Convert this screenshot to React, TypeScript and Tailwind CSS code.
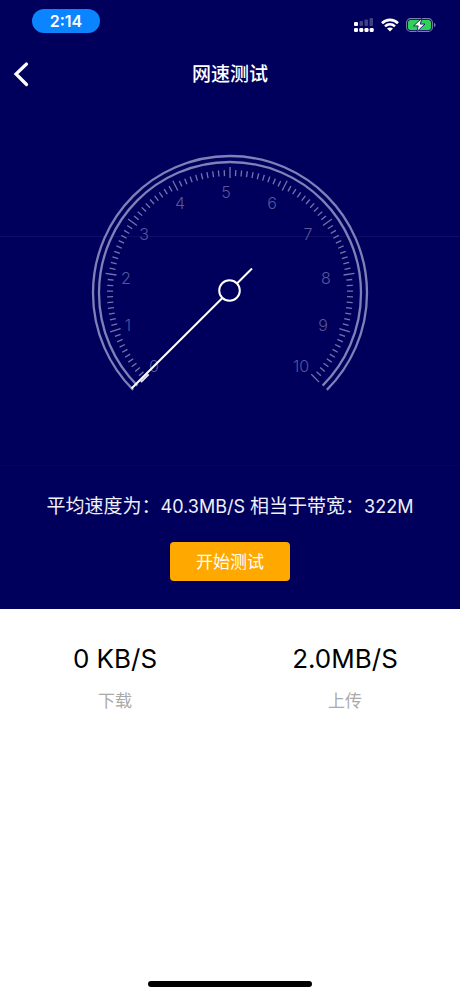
import React from 'react';

const FONT = "font-['Inter','Noto_Sans_CJK_SC',sans-serif]";

const CX = 140;
const CY = 140;

const labels = [
  { text: '0', x: 64, y: 213 },
  { text: '1', x: 38, y: 172 },
  { text: '2', x: 36, y: 125 },
  { text: '3', x: 54, y: 81 },
  { text: '4', x: 90, y: 50 },
  { text: '5', x: 136, y: 39 },
  { text: '6', x: 182, y: 50 },
  { text: '7', x: 218, y: 81 },
  { text: '8', x: 236, y: 125 },
  { text: '9', x: 233, y: 172 },
  { text: '10', x: 211, y: 213 },
];

const ticks = Array.from({ length: 101 }, (_, i) => i);

// Point on the dial, angle measured clockwise from the top
const polar = (radius: number, degrees: number) => {
  const rad = (degrees * Math.PI) / 180;
  return { x: CX + radius * Math.sin(rad), y: CY - radius * Math.cos(rad) };
};

const arc = (radius: number) => {
  const start = polar(radius, -135);
  const end = polar(radius, 135);
  return `M${start.x} ${start.y}A${radius} ${radius} 0 1 1 ${end.x} ${end.y}`;
};

const StatusBar: React.FC = () => {
  return (
    <div className="flex h-12 items-start justify-between pl-8 pr-6 pt-2">
      <span className="mt-px flex h-6 w-17 items-center justify-center rounded-full bg-[#0a84ff] text-base font-semibold text-white">
        2:14
      </span>
      <div className="flex h-8 items-center gap-[7px] pt-0.5">
        {/* Dual SIM signal */}
        <svg width="20" height="14" viewBox="0 0 20 14" fill="#fff" aria-hidden="true">
          <rect x="0" y="4" width="4" height="4" rx="1" />
          <rect x="5.5" y="3" width="3.5" height="5" rx="1" opacity="0.25" />
          <rect x="10.5" y="1.5" width="3.5" height="6.5" rx="1" opacity="0.25" />
          <rect x="15.5" y="0" width="3.5" height="8" rx="1" opacity="0.25" />
          <rect x="0" y="10" width="4" height="4" rx="1.3" />
          <rect x="5.3" y="10" width="4" height="4" rx="1.3" />
          <rect x="10.5" y="10" width="4" height="4" rx="1.3" />
          <rect x="15.7" y="10" width="4" height="4" rx="1.3" />
        </svg>
        <svg width="18" height="14" viewBox="0 0 18 14" fill="none" stroke="#fff" strokeWidth="2.6" aria-hidden="true">
          <path d="M1 5.2C5.6.7 12.4.7 17 5.2" />
          <path d="M4 8.4c2.9-2.7 7.1-2.7 10 0" />
          <path d="M9 13.6 6 10.6c1.700-1.500 4.300-1.500 6 0z" fill="#fff" stroke="none" />
        </svg>
        <svg width="30" height="14" viewBox="0 0 30 14" aria-hidden="true">
          <rect x="0.6" y="0.6" width="25.8" height="12.8" rx="4" fill="none" stroke="#7c7cae" strokeWidth="1.1" />
          <rect x="2" y="2" width="23" height="10" rx="2.5" fill="#30d158" />
          <path d="M28 5v4c1-.4 1.5-1.1 1.5-2S29 5.4 28 5z" fill="#7c7cae" />
          <path d="M15.800.3 7.600 7.900h4.600l-1.400 5.800 8.200-7.600h-4.700z" fill="#fff" stroke="#00005c" strokeWidth="0.8" />
        </svg>
      </div>
    </div>
  );
};

const Header: React.FC = () => {
  return (
    <header className="grid h-13 grid-cols-[1fr_auto_1fr] items-center px-3 text-white">
      <button aria-label="返回" className="flex h-8 w-8 items-center">
        <svg width="18" height="26" viewBox="0 0 18 26" fill="none" stroke="currentColor" strokeWidth="3.2" strokeLinecap="round" aria-hidden="true">
          <path d="M14.5 3 4 13l10.500 10.500" />
        </svg>
      </button>
      <h1 className="pt-0.5 text-[19px] font-medium leading-7">网速测试</h1>
    </header>
  );
};

const Gauge: React.FC = () => {
  return (
    <svg width="280" height="240" viewBox="0 0 280 240" className="mx-auto block" role="img" aria-label="0 - 10">
      <g fill="none" stroke="#8080b8" strokeWidth="2.3">
        <path d={arc(137)} />
        <path d={arc(131)} />
      </g>
      {ticks.map((i) => {
        const major = i % 10 === 0;
        const angle = -135 + i * 2.7;
        const from = polar(major ? 115 : 117, angle);
        const to = polar(major ? 126 : 123, angle);
        return (
          <line
            key={i}
            x1={from.x}
            y1={from.y}
            x2={to.x}
            y2={to.y}
            stroke={i === 0 ? '#e4e4f4' : '#7474ac'}
            strokeWidth={i === 0 ? 2 : 1.3}
          />
        );
      })}
      <g fill="#56569a" fontSize="16" fontWeight="300" textAnchor="middle" dominantBaseline="central">
        {labels.map((label) => (
          <text key={label.text} x={label.x} y={label.y}>
            {label.text}
          </text>
        ))}
      </g>
      <g stroke="#fff" strokeWidth="2">
        <line x1="41.5" y1="235.5" x2="162" y2="115.5" />
        <circle cx="139.500" cy="137.500" r="10.300" fill="#00005c" />
      </g>
    </svg>
  );
};

const stats = [
  { value: '0 KB/S', label: '下载' },
  { value: '2.0MB/S', label: '上传' },
];

const App: React.FC = () => {
  return (
    <div className={`${FONT} flex min-h-screen flex-col bg-white`}>
      <div className="relative bg-[#00005c] pb-7">
        {/* Faint hairlines across the background */}
        <div className="absolute inset-x-0 top-[236px] h-px bg-[#0e0e66]" />
        <div className="absolute inset-x-0 top-[465px] h-px bg-[#050560]" />
        <div className="relative">
          <StatusBar />
          <Header />
          <main className="flex flex-col items-center pt-[53px]">
            <Gauge />
            <p className="mt-[98px] text-[19px] leading-8 text-[#f0f0fa]">
              平均速度为：<span className="text-[18px]">40.3MB/S </span>
              相当于带宽：<span className="text-[18px]">322M</span>
            </p>
            <button className="mt-[19px] h-[39px] w-30 rounded-sm bg-[#ffa800] pt-0.5 text-[17px] text-white">
              开始测试
            </button>
          </main>
        </div>
      </div>

      <dl className="grid grid-cols-2 pt-8 text-center">
        {stats.map((stat) => (
          <div key={stat.label} className="flex flex-col-reverse">
            <dt className="mt-2 text-[17px] leading-8 text-[#aaaaaa]">{stat.label}</dt>
            <dd className="text-[26px] leading-9 text-black">{stat.value}</dd>
          </div>
        ))}
      </dl>

      {/* Home indicator */}
      <div className="mx-auto mt-auto mb-[9px] h-[6px] w-41 rounded-full bg-black" />
    </div>
  );
};

export default App;
